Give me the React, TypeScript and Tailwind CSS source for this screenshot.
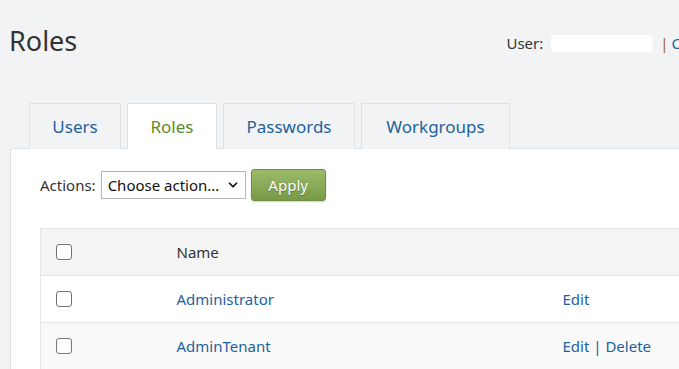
import { ChevronDown } from 'lucide-react';

const tabs = ['Users', 'Roles', 'Passwords', 'Workgroups'];
const tabWidths = ['w-[92px]', 'w-[90px]', 'w-[132px]', 'w-[149px]'];

const roles = [
  { name: 'Administrator', canDelete: false },
  { name: 'AdminTenant', canDelete: true },
];

function Checkbox() {
  return <span className="block w-[16px] h-[16px] rounded-[3px] border border-[#767676] bg-white" />;
}

export default function App() {
  return (
    <div
      className="min-h-screen w-[679px] overflow-hidden bg-[#f2f3f5] text-[#333]"
      style={{ fontFamily: '"Noto Sans", "Open Sans", sans-serif' }}
    >
      {/* Header */}
      <div className="flex items-start justify-between h-[103px] pl-[9px] pt-[22px]">
        <h1 className="text-[27px] font-normal leading-[38px] text-[#333]">Roles</h1>
        <div className="flex items-center text-[15px] pt-[10px] whitespace-nowrap -mr-[2px]">
          <span>User:</span>
          <span className="ml-[8px] w-[102px] h-[17px] rounded-[4px] bg-white" />
          <span className="ml-[7px] text-[#a0622a]">|</span>
          <span className="ml-[3px] text-[#22629c]">C</span>
        </div>
      </div>

      {/* Tabs */}
      <div className="flex gap-[6px] pl-[29px] relative z-10 -mb-px">
        {tabs.map((t, i) => (
          <div
            key={t}
            className={`${tabWidths[i]} h-[46px] flex items-center justify-center border border-b-0 border-[#dee2e6] text-[17px] ${
              t === 'Roles' ? 'bg-white text-[#5b8a2b]' : 'bg-[#f2f3f5] text-[#22629c]'
            }`}
          >
            {t}
          </div>
        ))}
      </div>

      {/* Panel */}
      <div className="ml-[10px] bg-white border-l border-t border-[#dee2e6] rounded-tl-[4px] pl-[29px] pt-[20px] pb-4">
        <div className="flex items-center text-[15px]">
          <span className="mr-[5px]">Actions:</span>
          <div className="w-[145px] h-[28px] border border-[#b5b5b5] flex items-center justify-between pl-[6px] pr-[5px] text-[15px] text-[#111] whitespace-nowrap">
            <span>Choose action...</span>
            <ChevronDown size={14} strokeWidth={3} />
          </div>
          <button className="ml-[5px] w-[75px] h-[32px] rounded-[3px] border border-[#6f8e42] bg-gradient-to-b from-[#9cbb6c] to-[#789a45] text-white text-[15px] [text-shadow:0_1px_1px_rgba(0,0,0,0.35)] shadow-[0_1px_2px_rgba(0,0,0,0.2)]">
            Apply
          </button>
        </div>

        <table className="mt-[27px] w-[700px] border-collapse text-[15px]">
          <tbody>
            <tr className="h-[47px] bg-[#f4f4f4] border border-[#e6e6e6]">
              <td className="w-[136px] pl-[15px]"><Checkbox /></td>
              <td className="w-[386px] text-[#333]">Name</td>
              <td />
            </tr>
            {roles.map((r, i) => (
              <tr key={r.name} className={`h-[47px] border border-[#e6e6e6] ${i % 2 ? 'bg-[#f9f9f9]' : 'bg-white'}`}>
                <td className="pl-[15px]"><Checkbox /></td>
                <td className="text-[#22629c]">{r.name}</td>
                <td className="text-[#22629c]">
                  Edit{r.canDelete && <span> | Delete</span>}
                </td>
              </tr>
            ))}
          </tbody>
        </table>
      </div>
    </div>
  );
}
